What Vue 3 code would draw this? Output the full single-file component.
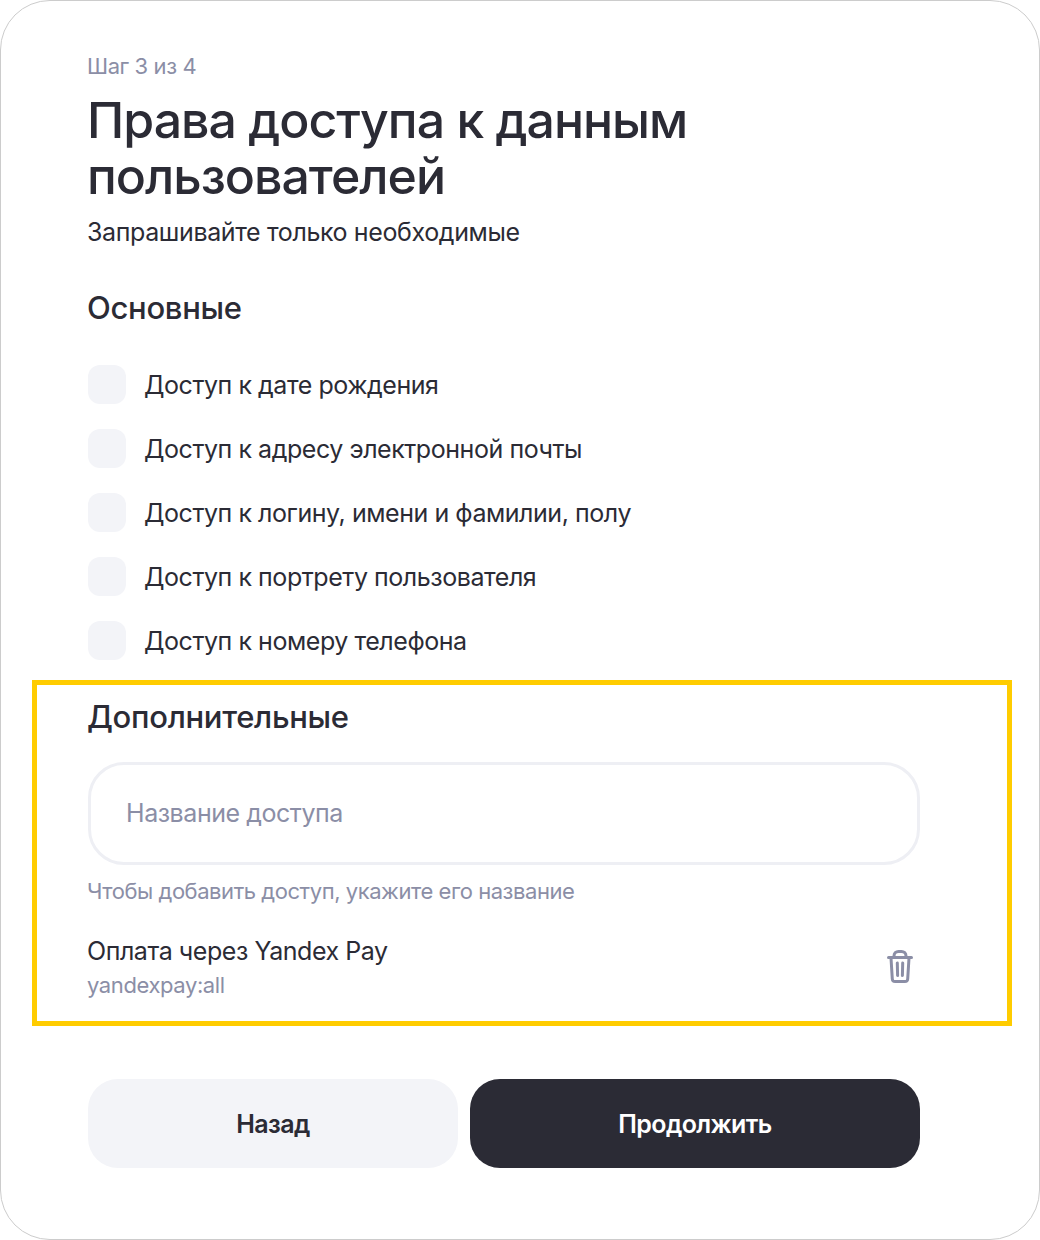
<script setup>
const basics = [
  'Доступ к дате рождения',
  'Доступ к адресу электронной почты',
  'Доступ к логину, имени и фамилии, полу',
  'Доступ к портрету пользователя',
  'Доступ к номеру телефона'
]
</script>

<template>
  <div class="card">
    <div class="step">Шаг 3 из 4</div>
    <h1 class="title">Права доступа к данным пользователей</h1>
    <p class="lead">Запрашивайте только необходимые</p>

    <h2 class="section-title">Основные</h2>
    <div class="options">
      <label v-for="item in basics" :key="item" class="option">
        <span class="check"></span>
        <span>{{ item }}</span>
      </label>
    </div>

    <section class="extra">
      <h2 class="extra-title">Дополнительные</h2>
      <div class="field">Название доступа</div>
      <div class="hint">Чтобы добавить доступ, укажите его название</div>
      <div class="scope">
        <div class="scope-text">
          <div class="scope-name">Оплата через Yandex Pay</div>
          <div class="scope-key">yandexpay:all</div>
        </div>
        <svg class="trash" viewBox="0 0 26 34" fill="none" stroke="#8b8ea6" stroke-width="3" stroke-linecap="round" stroke-linejoin="round">
          <path d="M1.500 7.500h23" />
          <path d="M7 7V6c0-2.800 2-4.500 4.500-4.500h3C17 1.500 19 3.200 19 6v1" />
          <path d="M4 8l1.300 21c.1 1.600 1.200 2.600 2.800 2.600h9.800c1.600 0 2.700-1 2.800-2.600L22 8" />
          <path d="M10.300 13l.3 12.500M15.700 13l-.3 12.500" />
        </svg>
      </div>
    </section>

    <div class="actions">
      <button type="button" class="btn btn-back">Назад</button>
      <button type="button" class="btn btn-next">Продолжить</button>
    </div>
  </div>
</template>

<style scoped>
.card {
  box-sizing: border-box;
  width: 1040px;
  height: 1240px;
  padding: 52px 119px 0 87px;
  background: #fff;
  border: 1px solid #ccc;
  border-radius: 50px;
  font-family: Inter, "Noto Sans", sans-serif;
  color: #2b2b35;
}
.step {
  margin-left: -1px;
  font-size: 22px;
  line-height: 26px;
  color: #8b8ea6;
  letter-spacing: -0.4px;
}
.title {
  margin: 13px 0 0 -1px;
  width: 700px;
  font-size: 50px;
  line-height: 56px;
  font-weight: 500;
  letter-spacing: -1px;
}
.lead {
  margin: 12px 0 0 -1px;
  font-size: 25px;
  line-height: 32px;
  letter-spacing: -0.38px;
}
.section-title,
.extra-title {
  margin: 0;
  font-size: 31px;
  line-height: 38px;
  font-weight: 500;
  letter-spacing: -0.3px;
}
.section-title {
  margin: 41px 0 0 -1px;
}
.options {
  margin-top: 38px;
  display: flex;
  flex-direction: column;
  gap: 25px;
}
.option {
  display: flex;
  align-items: center;
  gap: 18px;
  height: 39px;
  font-size: 25px;
  letter-spacing: -0.45px;
}
.check {
  width: 38px;
  height: 39px;
  border-radius: 12px;
  background: #f3f4f8;
}
.extra {
  box-sizing: border-box;
  height: 346px;
  margin: 20px 0 0 -56px;
  width: 980px;
  padding: 13px 0 0 51px;
  border: 5px solid #fc0;
}
.extra-title {
  margin-left: -1px;
}
.field {
  box-sizing: border-box;
  width: 832px;
  height: 103px;
  margin-top: 26px;
  padding: 0 0 2px 35px;
  display: flex;
  align-items: center;
  border: 3px solid #eeeff4;
  border-radius: 36px;
  font-size: 25px;
  letter-spacing: -0.45px;
  color: #8b8ea6;
}
.hint {
  margin: 12px 0 0 -1px;
  font-size: 22px;
  line-height: 28px;
  letter-spacing: -0.45px;
  color: #8b8ea6;
}
.scope {
  width: 832px;
  margin-top: 29px;
  display: flex;
  align-items: center;
  justify-content: space-between;
}
.scope-text {
  margin-left: -1px;
}
.scope-name {
  font-size: 25px;
  line-height: 34px;
  letter-spacing: -0.45px;
}
.scope-key {
  margin-top: 3px;
  font-size: 22px;
  line-height: 28px;
  letter-spacing: -0.4px;
  color: #8b8ea6;
}
.trash {
  width: 26px;
  height: 34px;
  margin-right: 7px;
}
.actions {
  margin-top: 53px;
  display: flex;
  gap: 12px;
}
.btn {
  height: 89px;
  border: 0;
  border-radius: 30px;
  font: inherit;
  font-size: 25px;
  font-weight: 600;
  letter-spacing: -0.6px;
  cursor: pointer;
}
.btn-back {
  width: 370px;
  background: #f3f4f8;
  color: #2b2b35;
}
.btn-next {
  width: 450px;
  background: #2b2b35;
  color: #fff;
}
</style>
